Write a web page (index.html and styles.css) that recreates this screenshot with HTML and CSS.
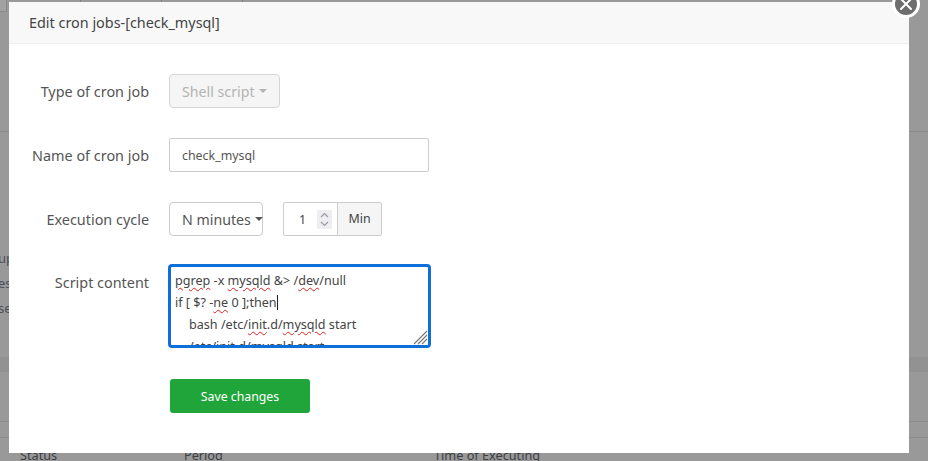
FILE: index.html
```html
<!DOCTYPE html>
<html lang="en">
<head>
<meta charset="utf-8">
<title>Edit cron jobs</title>
<link rel="stylesheet" href="styles.css">
</head>
<body>
<div class="backdrop">
  <div class="bg-corner"></div>
  <div class="bg-tabs"><span class="bg-tab"></span><span class="bg-tab"></span><span class="bg-tab"></span></div>
  <div class="bg-rule bg-rule-a"></div>
  <div class="bg-word bg-word-a">up</div>
  <div class="bg-word bg-word-b">es</div>
  <div class="bg-word bg-word-c">se</div>
  <div class="bg-band"></div>
  <div class="bg-rule bg-rule-b"></div>
  <div class="bg-rule bg-rule-c"></div>
  <div class="bg-head"><span class="bg-status">Status</span><span class="bg-period">Period</span><span class="bg-time">Time of Executing</span></div>
</div>
<section class="modal">
  <header class="modal-head">Edit cron jobs-[check_mysql]</header>
  <form class="modal-body">
    <div class="row row-type">
      <label class="label">Type of cron job</label>
      <button type="button" class="select select-disabled">Shell script<i class="caret"></i></button>
    </div>
    <div class="row row-name">
      <label class="label">Name of cron job</label>
      <input class="text-input" value="check_mysql">
    </div>
    <div class="row row-cycle">
      <label class="label">Execution cycle</label>
      <button type="button" class="select select-cycle">N minutes<i class="caret caret-dark"></i></button>
      <div class="number-group">
        <span class="number-value">1</span>
        <span class="spinner">
          <svg width="15" height="19" viewBox="0 0 15 19"><path d="M4 7l3.5-3.5L11 7M4 12l3.5 3.5L11 12" fill="none" stroke="#9a9aa0" stroke-width="1.2"/></svg>
        </span>
        <span class="number-unit">Min</span>
      </div>
    </div>
    <div class="row row-script">
      <label class="label label-script">Script content</label>
      <div class="script">
        <div class="script-line"><span class="sp">pgrep</span> -x <span class="sp">mysqld</span> &amp;&gt; /<span class="sp">dev</span>/null</div>
        <div class="script-line">if [ $? -<span class="sp">ne</span> 0 ];then<span class="cursor"></span></div>
        <div class="script-line script-indent">bash /etc/<span class="sp">init</span>.d/<span class="sp">mysqld</span> start</div>
        <div class="script-line script-indent">/etc/init.d/mysqld start</div>
        <svg class="grip" width="15" height="15" viewBox="0 0 15 15"><path d="M1 14L14 1M5 14l9-9M9 14l5-5" fill="none" stroke="#777" stroke-width="1.1"/></svg>
      </div>
    </div>
    <div class="row row-save">
      <button type="button" class="save">Save changes</button>
    </div>
  </form>
  <button type="button" class="close" aria-label="Close">
    <svg width="14" height="14" viewBox="0 0 14 14"><path d="M2 2l10 10M12 2L2 12" stroke="#fff" stroke-width="2" stroke-linecap="round"/></svg>
  </button>
</section>
</body>
</html>
```
FILE: styles.css
```css
* { box-sizing: border-box; }
html, body { margin: 0; height: 100%; }
body {
  width: 928px;
  height: 461px;
  overflow: hidden;
  background: #999;
  font-family: "Noto Sans", "Open Sans", sans-serif;
  color: #555;
  position: relative;
}
.backdrop { position: absolute; inset: 0; background: #999; overflow: hidden; }
.bg-corner { position: absolute; left: 0; top: 0; width: 7px; height: 12px; background: #a2a2a2; border-right: 1px solid #8a8a8a; border-bottom: 1px solid #8a8a8a; }
.bg-tabs { position: absolute; left: 0; top: 0; display: flex; height: 2px; }
.bg-tab { width: 81px; border-right: 1px solid #808080; }
.bg-rule { position: absolute; left: 0; right: 0; height: 1px; background: #8a8a8a; }
.bg-rule-a { top: 131px; }
.bg-rule-b { top: 421px; }
.bg-rule-c { top: 437px; }
.bg-band { position: absolute; left: 0; right: 0; top: 357px; height: 15px; background: #929292; }
.bg-word { position: absolute; left: 0; font-size: 13px; line-height: 16px; color: #4a4f58; }
.bg-word-a { top: 250px; left: -2px; }
.bg-word-b { top: 275px; left: -2px; }
.bg-word-c { top: 300px; left: -2px; }
.bg-head { font-size: 12.7px; line-height: 18px; color: #3c3f44; }
.bg-head span { position: absolute; top: 446px; }
.bg-status { left: 20px; }
.bg-period { left: 184px; }
.bg-time { left: 434px; }

.modal {
  position: absolute;
  left: 9px;
  top: 2px;
  width: 900px;
  height: 451px;
  background: #fff;
}
.modal-head {
  height: 42px;
  padding-left: 20px;
  font-size: 14.4px;
  line-height: 42px;
  color: #444;
  background: #f8f8f8;
  border-bottom: 1px solid #eee;
}
.modal-body { display: flex; flex-direction: column; padding-top: 30px; }
.row { display: flex; align-items: center; }
.label {
  width: 140px;
  text-align: right;
  font-size: 14.4px;
  color: #555;
}
.row-name { margin-top: 30px; }
.row-cycle { margin-top: 30px; }
.row-script { margin-top: 28px; align-items: flex-start; }
.row-save { margin-top: 31px; padding-left: 161px; }
.label-script { padding-top: 9px; line-height: 20px; }

.select {
  height: 34px;
  margin-left: 20px;
  padding: 0 12px;
  display: flex;
  align-items: center;
  background: #fff;
  border: 1px solid #ccc;
  border-radius: 4px;
  font: inherit;
  font-size: 14.2px;
  color: #555;
}
.select-disabled { width: 111px; background: #f5f5f5; color: #b4b4b4; border-color: #d6d6d6; white-space: nowrap; }
.select-cycle { width: 94px; white-space: nowrap; }
.caret {
  width: 0;
  height: 0;
  margin-left: 4px;
  border-left: 4px solid transparent;
  border-right: 4px solid transparent;
  border-top: 4px solid #b4b4b4;
}
.caret-dark { border-top-color: #555; flex: none; }

.text-input {
  width: 260px;
  height: 34px;
  margin-left: 20px;
  padding: 0 12px;
  border: 1px solid #ccc;
  border-radius: 2px;
  font: inherit;
  font-size: 12.4px;
  color: #555;
}

.number-group {
  display: flex;
  align-items: center;
  width: 99px;
  height: 34px;
  margin-left: 20px;
  border: 1px solid #ccc;
  border-radius: 2px;
  font-size: 12.4px;
}
.number-value { width: 33px; padding-left: 15px; color: #444; }
.spinner { width: 15px; height: 19px; background: #eeeef2; display: flex; margin-left: 0; }
.number-unit {
  margin-left: 5px;
  flex: 1;
  height: 100%;
  line-height: 32px;
  text-align: center;
  background: #f5f5f5;
  border-left: 1px solid #ccc;
  color: #444;
}

.script {
  position: relative;
  width: 263px;
  height: 84px;
  margin-left: 19px;
  padding: 3px 4px 0;
  border: 3px solid #0f6fd8;
  border-radius: 4px;
  overflow: hidden;
  font-size: 12.6px;
  line-height: 22px;
  color: #444;
}
.script-line { white-space: pre; height: 22px; }
.script-indent { padding-left: 14px; }
.sp {
  text-decoration: underline wavy #e02020 1px;
  text-underline-offset: 2px;
}
.cursor { display: inline-block; width: 1px; height: 15px; background: #222; vertical-align: -3px; }
.grip { position: absolute; right: 0; bottom: 0; background: #fff; }

.save {
  width: 140px;
  height: 34px;
  border: 0;
  border-radius: 3px;
  background: #20a53a;
  color: #fff;
  font: inherit;
  font-size: 12.3px;
}
.close {
  position: absolute;
  left: 883px;
  top: -12px;
  width: 28px;
  height: 28px;
  padding: 0;
  display: flex;
  align-items: center;
  justify-content: center;
  border: 3px solid #fff;
  border-radius: 50%;
  background: #6e6e6e;
}
```
